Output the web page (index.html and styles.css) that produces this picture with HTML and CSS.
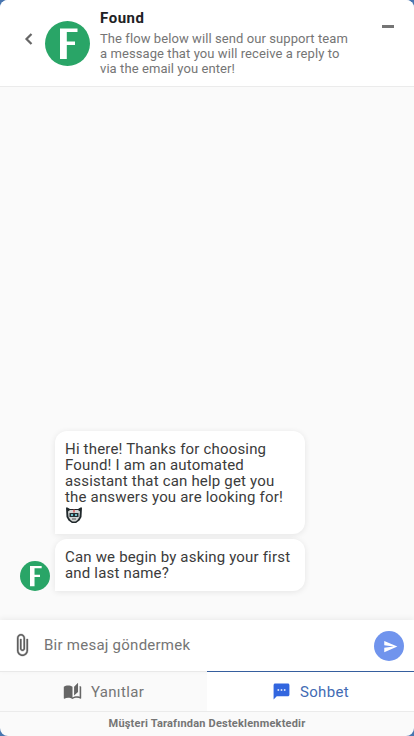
FILE: index.html
```html
<!DOCTYPE html>
<html lang="tr">
<head>
<meta charset="utf-8">
<title>Found</title>
<link rel="stylesheet" href="styles.css">
</head>
<body>
<main class="chat">
  <header class="header">
    <svg class="back" viewBox="0 0 10 14"><path d="M7.500 2L2.500 7l5 5"/></svg>
    <svg class="logo" viewBox="0 0 45 45"><circle cx="22.5" cy="22.5" r="22.5"/><path d="M15 7.500h17.500v3.500H21.800v9.500H30V24h-8.200v14H15z"/></svg>
    <div class="intro">
      <h1>Found</h1>
      <p>The flow below will send our support team<br>a message that you will receive a reply to<br>via the email you enter!</p>
    </div>
    <div class="minimize"></div>
  </header>
  <section class="messages">
    <div class="bubble">Hi there! Thanks for choosing<br>Found! I am an automated<br>assistant that can help get you<br>the answers you are looking for!<br>
      <svg class="robot" viewBox="0 0 18 18"><path fill="#20282b" d="M1 1.500h1.500L5 3h8l2.500-1.500H17L16.500 11l-2 3.500L11 17H7l-3.500-2.500-2-3.500z"/><path fill="#d2d5d4" d="M5 4h8l2 1.500-.5 5.500-2 3L10.500 15.500h-3L5.500 14l-2-3L3 5.500z"/><path fill="#242f32" d="M4.500 7h9v4h-9z"/><path fill="#72bfc9" d="M6 8h2v2H6zm4 0h2v2h-2z"/><path fill="#d84b4b" d="M8.300 3.500h1.400v3H8.300z"/><path fill="#555" d="M7 12.500h4v1H7z"/></svg>
    </div>
    <div class="row">
      <svg class="avatar" viewBox="0 0 45 45"><circle cx="22.5" cy="22.5" r="22.5"/><path d="M15 7.500h17.500v3.500H21.800v9.500H30V24h-8.200v14H15z"/></svg>
      <div class="bubble second">Can we begin by asking your first<br>and last name?</div>
    </div>
  </section>
  <div class="composer">
    <svg class="clip" viewBox="0 0 24 24"><path d="M16.5 6v11.500c0 2.210-1.790 4-4 4s-4-1.790-4-4V5c0-1.380 1.120-2.500 2.500-2.500s2.500 1.120 2.500 2.500v10.500c0 .55-.45 1-1 1s-1-.45-1-1V6H10v9.500c0 1.380 1.120 2.500 2.500 2.500s2.500-1.120 2.500-2.500V5c0-2.210-1.790-4-4-4S7 2.790 7 5v12.500c0 3.040 2.460 5.500 5.500 5.500s5.500-2.460 5.500-5.500V6h-1.500z"/></svg>
    <span class="placeholder">Bir mesaj göndermek</span>
    <div class="send"><svg viewBox="0 0 24 24"><path d="M2.010 21L23 12 2.010 3 2 10l15 2-15 2z"/></svg></div>
  </div>
  <nav class="tabs">
    <div class="tab">
      <svg class="book" viewBox="0 0 24 24"><path d="M19 1l-5 5v11l5-4.500V1zM1 6v14.650c0 .25.25.5.5.5.1 0 .15-.05.25-.05C3.100 20.450 5.050 20 6.500 20c1.950 0 4.050.4 5.500 1.500V6c-1.450-1.100-3.550-1.500-5.500-1.500S2.450 4.900 1 6zm22 13.500V6c-.6-.45-1.250-.75-2-1v13.500c-1.100-.35-2.300-.5-3.500-.5-1.700 0-4.150.65-5.500 1.500v2c1.350-.85 3.800-1.500 5.500-1.500 1.650 0 3.350.3 4.750 1.050.1.05.15.05.25.05.25 0 .5-.25.5-.5z"/></svg>
      <span>Yanıtlar</span>
    </div>
    <div class="tab active">
      <svg class="sms" viewBox="0 0 24 24"><path d="M20 2H4c-1.100 0-2 .9-2 2v18l4-4h14c1.100 0 2-.9 2-2V4c0-1.100-.9-2-2-2zM9 11H7V9h2v2zm4 0h-2V9h2v2zm4 0h-2V9h2v2z"/></svg>
      <span>Sohbet</span>
    </div>
  </nav>
  <footer>Müşteri Tarafından Desteklenmektedir</footer>
</main>
</body>
</html>
```
FILE: styles.css
```css
* { box-sizing: border-box; }
body { margin: 0; background: #4876b0; font-family: Roboto, "Liberation Sans", sans-serif; }
.chat { width: 414px; height: 736px; display: flex; flex-direction: column; overflow: hidden; border-radius: 8px; background: #fafafa; }
.header { height: 87px; display: flex; flex: none; background: #fff; border-bottom: 1px solid #ebebeb; padding-right: 20px; }
.back { width: 10px; height: 14px; margin: 32px 10px 0 24px; fill: none; stroke: #666; stroke-width: 2.2; }
.logo { width: 45px; height: 45px; margin: 21px 10px 0 1px; }
.logo circle, .avatar circle { fill: #29a567; }
.logo path, .avatar path { fill: #fff; }
.intro { flex: 1; padding-top: 9px; white-space: nowrap; }
h1 { margin: 0; font-size: 15px; line-height: 18px; font-weight: 700; color: #202124; letter-spacing: .55px; }
p { margin: 4px 0 0; font-size: 13px; line-height: 15px; color: #757575; letter-spacing: .08px; }
.minimize { width: 12px; height: 3px; margin-top: 25px; background: #757575; }
.messages { flex: 1; display: flex; flex-direction: column; justify-content: flex-end; padding: 0 0 29px 20px; }
.bubble { width: 250px; height: 103px; margin-left: 35px; padding: 10px; border-radius: 12px 12px 12px 0; background: #fff; box-shadow: 0 1px 6px rgba(0,0,0,.09); font-size: 15px; line-height: 16px; letter-spacing: .18px; color: #3b3b3b; white-space: nowrap; }
.robot { width: 18px; height: 18px; display: block; margin-top: 1px; }
.row { display: flex; align-items: flex-end; margin-top: 5px; }
.avatar { width: 30px; height: 30px; margin-right: 5px; }
.second { height: 52px; margin-left: 0; }
.composer { height: 51px; flex: none; display: flex; align-items: center; background: #fff; box-shadow: 0 -1px 6px rgba(0,0,0,.07); padding: 0 10px; }
.clip { width: 24px; height: 24px; margin-top: -1px; fill: #606060; stroke: #606060; stroke-width: .35; }
.placeholder { flex: 1; margin-left: 10px; padding-bottom: 2px; font-size: 15px; letter-spacing: .25px; color: #757575; }
.send { width: 30px; height: 30px; border-radius: 50%; background: #7094ed; display: flex; align-items: center; justify-content: center; }
.send svg { width: 15px; height: 15px; fill: #fff; margin: 1px 0 0 2px; }
.tabs { height: 40px; flex: none; display: flex; }
.tab { width: 50%; display: flex; align-items: center; justify-content: center; gap: 9px; border-top: 1px solid #e9e9e9; color: #757575; font-size: 15px; letter-spacing: .35px; }
.active { background: #fff; color: #426bb4; border-top-color: #365f9e; }
.book { width: 19px; height: 19px; fill: #666; }
.sms { width: 19px; height: 19px; fill: #3266df; }
footer { height: 25px; flex: none; border-top: 1px solid #ebebeb; color: #757575; font-size: 11px; line-height: 24px; font-weight: 700; letter-spacing: .2px; text-align: center; }
```
